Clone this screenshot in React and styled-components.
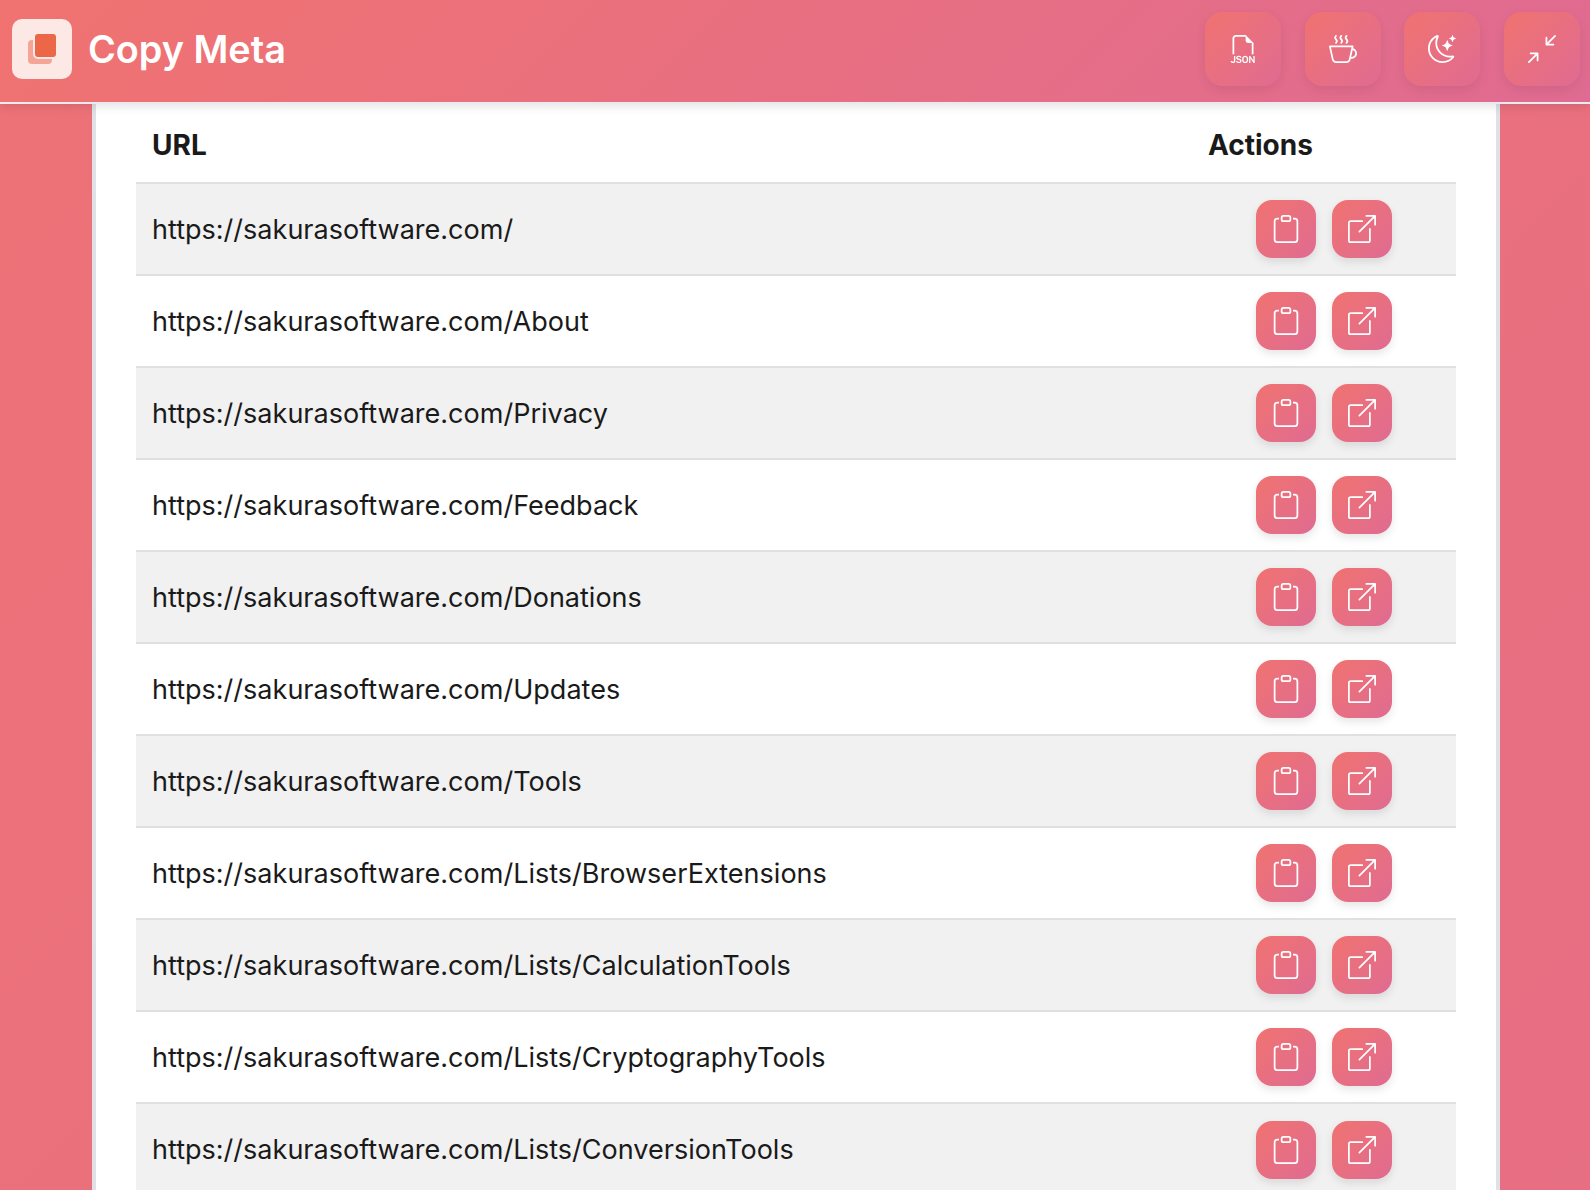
import React from 'react';
import styled, { createGlobalStyle } from 'styled-components';
import {
  BsFiletypeJson,
  BsCupHot,
  BsMoonStars,
  BsArrowsAngleContract,
  BsClipboard,
  BsBoxArrowUpRight,
} from 'react-icons/bs';

const GlobalStyle = createGlobalStyle`
  html, body {
    margin: 0;
    height: 100%;
    overflow: hidden;
  }
  body {
    font-family: Inter, "Liberation Sans", sans-serif;
    background: linear-gradient(135deg, #f07370 0%, #e06b92 100%) 0 -1300px / 100% 5500px no-repeat;
  }
`;

const Page = styled.div`
  height: 100vh;
  display: flex;
  flex-direction: column;
  overflow: hidden;
`;

const Header = styled.header`
  flex: none;
  box-sizing: border-box;
  height: 104px;
  border-bottom: 2px solid #e9e9ee;
  padding: 0 10px 4px 12px;
  display: flex;
  align-items: center;
  justify-content: space-between;
  background: linear-gradient(135deg, #f07370 0%, #e06b92 100%);
  box-shadow: 0 2px 10px rgba(0, 0, 0, 0.12);
  position: relative;
  z-index: 2;
`;

const Brand = styled.div`
  display: flex;
  align-items: center;
  gap: 16px;
`;

const LogoTile = styled.div`
  width: 60px;
  height: 60px;
  border-radius: 10px;
  background: #fce9e6;
  display: flex;
  align-items: center;
  justify-content: center;
`;

const Title = styled.h1`
  margin: 0;
  color: #fff;
  font-size: 37.8px;
  font-weight: 600;
`;

const HeaderActions = styled.div`
  display: flex;
  gap: 23.6px;
`;

const IconButton = styled.button`
  border: none;
  padding: 0;
  display: flex;
  align-items: center;
  justify-content: center;
  color: #fff;
  cursor: pointer;
  background: linear-gradient(135deg, #f07370 0%, #e06b92 100%);
`;

const HeaderButton = styled(IconButton)`
  width: 76px;
  height: 74px;
  border-radius: 18px;
  font-size: 28px;
  box-shadow: 0 4px 12px rgba(0, 0, 0, 0.08);
`;

const Main = styled.main`
  flex: 1;
  min-height: 0;
  padding: 0 90px 0 92px;
`;

const Panel = styled.section`
  height: 100%;
  background: #fff;
  border: solid #e0e1e6;
  border-width: 0 4px;
  padding: 0 40px;
`;

const Table = styled.table`
  width: 100%;
  border-collapse: collapse;
  color: #1a1a1a;
  font-size: 27.04px;
`;

const HeadCell = styled.th`
  box-sizing: border-box;
  width: ${({ $actions }) => ($actions ? '264px' : 'auto')};
  height: 79px;
  padding: 4px 16px 0;
  text-align: left;
  font-size: 28px;
  font-weight: 700;
`;

const Row = styled.tr`
  height: 92px;
  border-top: 2px solid #e0e0e0;
  background: ${({ $striped }) => ($striped ? '#f1f1f1' : '#fff')};
`;

const UrlCell = styled.td`
  padding: 0 16px;
`;

const ActionsCell = styled.td`
  padding: 0 16px;
`;

const RowActions = styled.div`
  display: flex;
  justify-content: center;
  gap: 16px;
`;

const RowButton = styled(IconButton)`
  width: 60px;
  height: 58px;
  border-radius: 16px;
  font-size: 28px;
  box-shadow: 0 4px 8px rgba(0, 0, 0, 0.1);
`;

const urls = [
  'https://sakurasoftware.com/',
  'https://sakurasoftware.com/About',
  'https://sakurasoftware.com/Privacy',
  'https://sakurasoftware.com/Feedback',
  'https://sakurasoftware.com/Donations',
  'https://sakurasoftware.com/Updates',
  'https://sakurasoftware.com/Tools',
  'https://sakurasoftware.com/Lists/BrowserExtensions',
  'https://sakurasoftware.com/Lists/CalculationTools',
  'https://sakurasoftware.com/Lists/CryptographyTools',
  'https://sakurasoftware.com/Lists/ConversionTools',
];

const Logo = () => (
  <svg width="28" height="30" viewBox="0 0 28 30">
    <rect x="0" y="6" width="24" height="24" rx="4" fill="#f5a595" />
    <rect x="6" y="-1" width="23" height="25" rx="4" fill="#ec6748" stroke="#fce9e6" strokeWidth="2" />
  </svg>
);

const App = () => (
  <Page>
    <GlobalStyle />
    <Header>
      <Brand>
        <LogoTile>
          <Logo />
        </LogoTile>
        <Title>Copy Meta</Title>
      </Brand>
      <HeaderActions>
        <HeaderButton><BsFiletypeJson /></HeaderButton>
        <HeaderButton><BsCupHot /></HeaderButton>
        <HeaderButton><BsMoonStars /></HeaderButton>
        <HeaderButton><BsArrowsAngleContract /></HeaderButton>
      </HeaderActions>
    </Header>
    <Main>
      <Panel>
        <Table>
          <thead>
            <tr>
              <HeadCell>URL</HeadCell>
              <HeadCell $actions>Actions</HeadCell>
            </tr>
          </thead>
          <tbody>
            {urls.map((url, index) => (
              <Row key={url} $striped={index % 2 === 0}>
                <UrlCell>{url}</UrlCell>
                <ActionsCell>
                  <RowActions>
                    <RowButton><BsClipboard /></RowButton>
                    <RowButton><BsBoxArrowUpRight /></RowButton>
                  </RowActions>
                </ActionsCell>
              </Row>
            ))}
          </tbody>
        </Table>
      </Panel>
    </Main>
  </Page>
);

export default App;
